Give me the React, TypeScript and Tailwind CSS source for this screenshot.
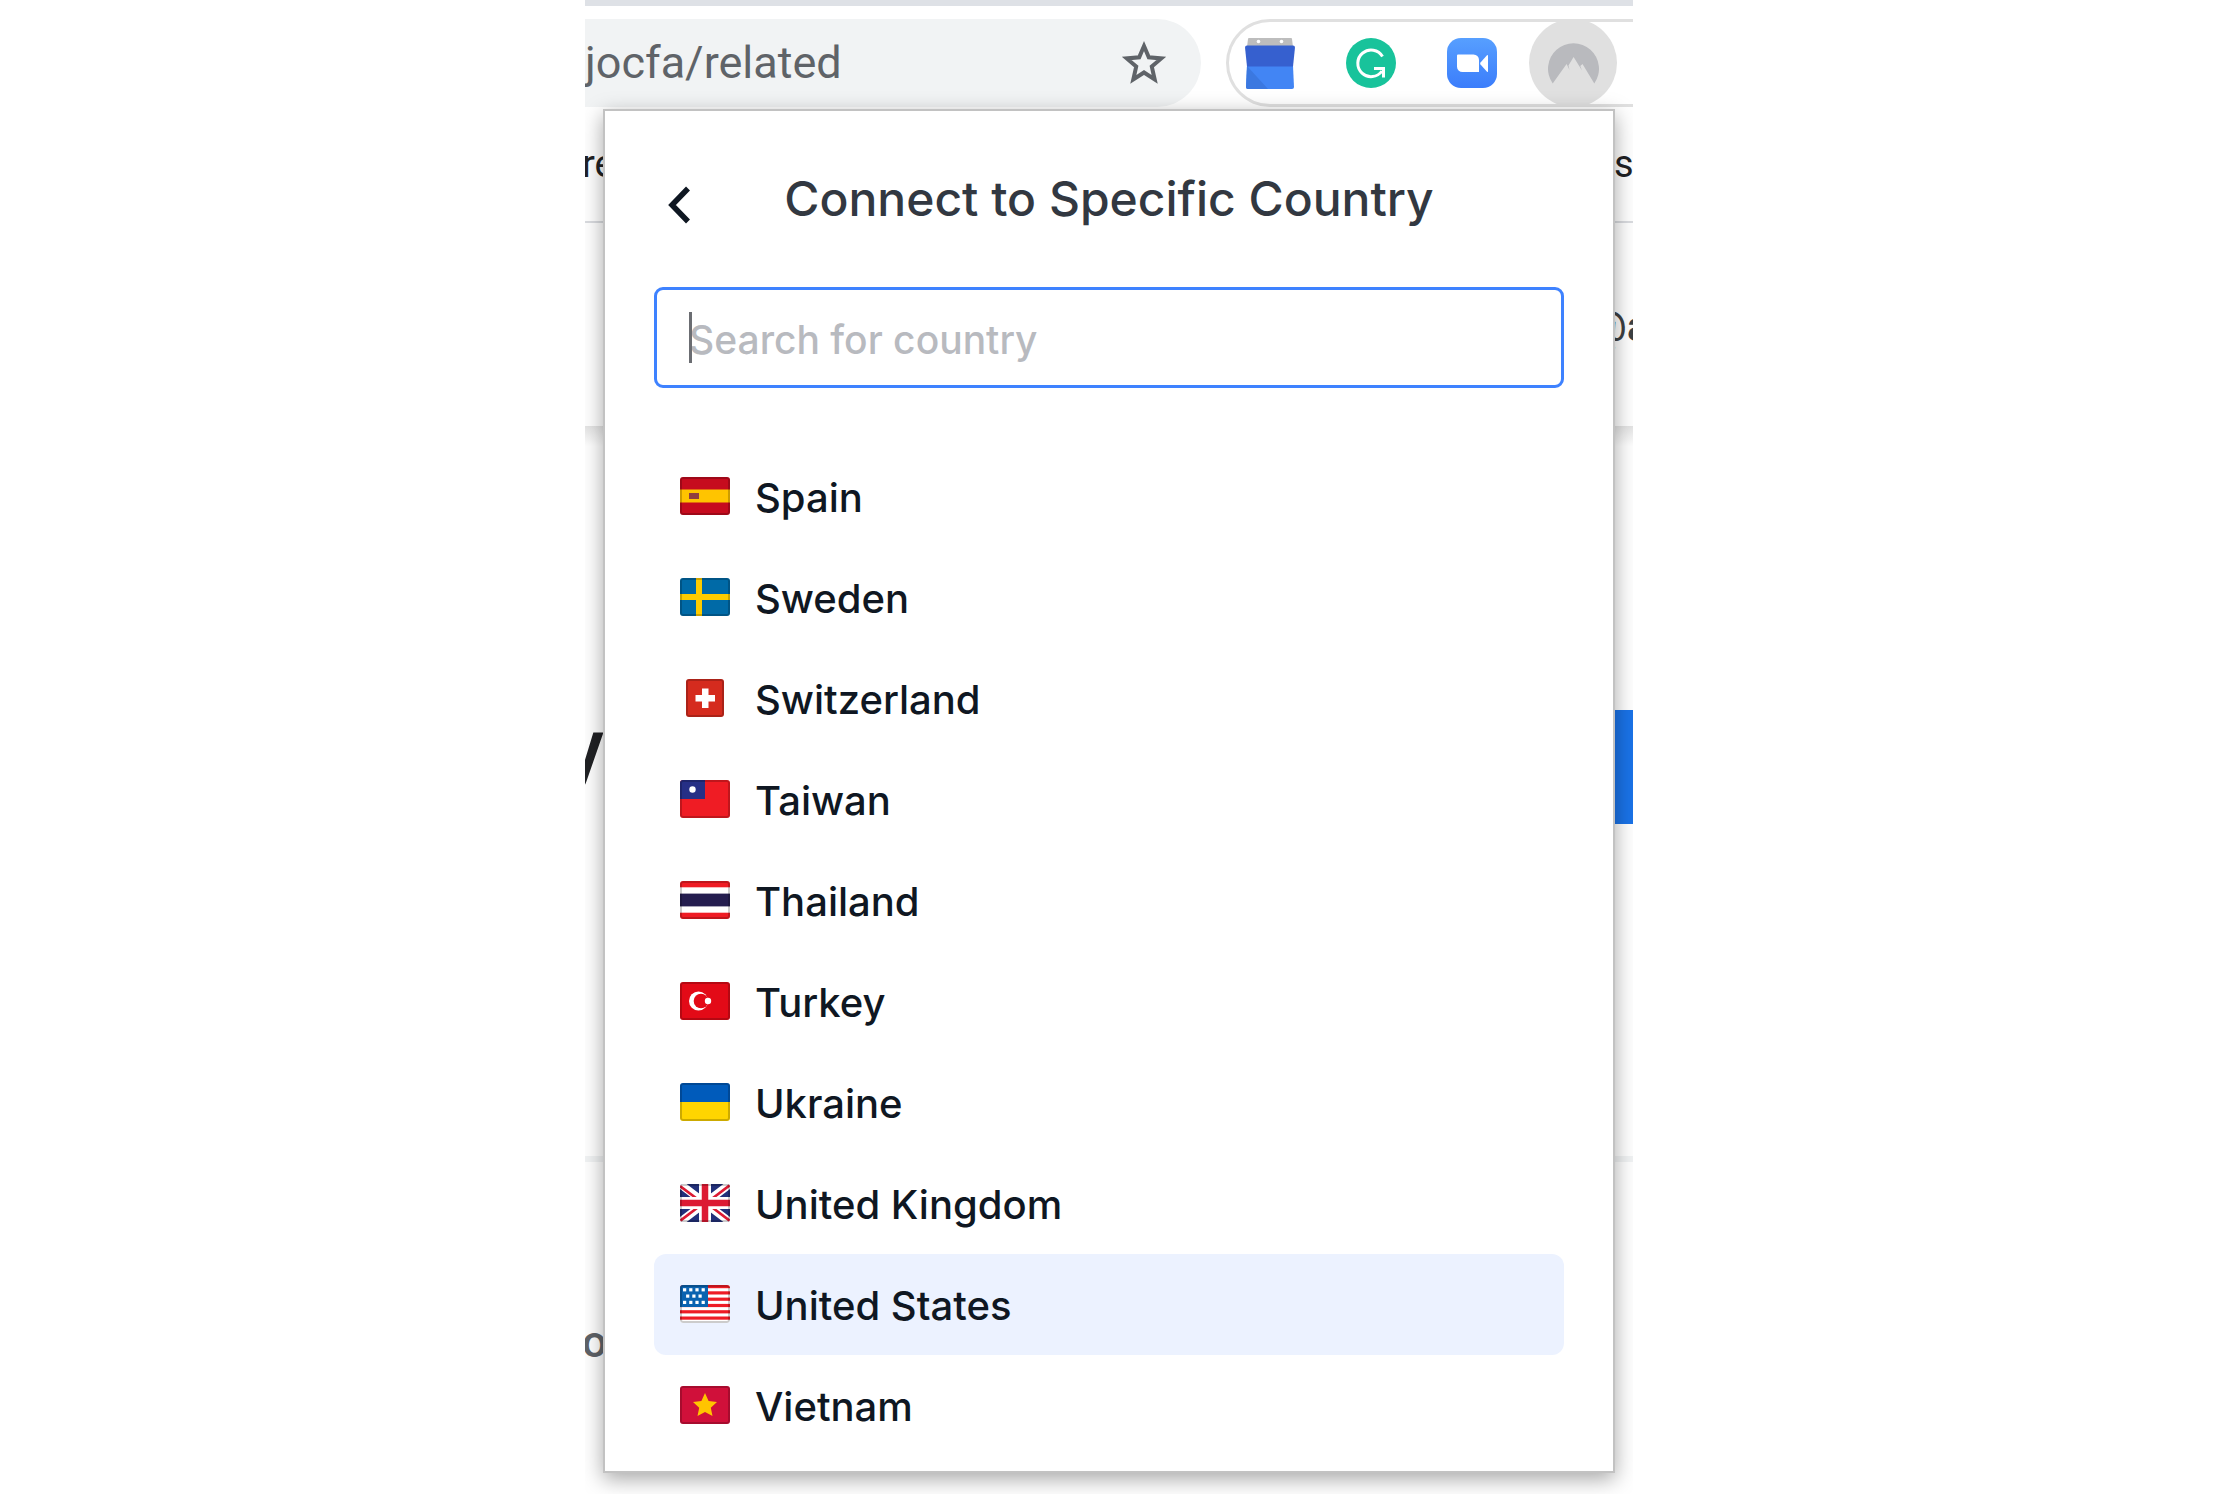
import type { ReactNode } from "react";

function FlagFrame({ width = 50, children }: { width?: number; children: ReactNode }) {
  return (
    <svg viewBox={`0 0 ${width} 38`} width={width} height={38} className="block rounded-[3px]" aria-hidden="true">
      {children}
      <rect x="1" y="1" width={width - 2} height="36" rx="2" fill="none" stroke="#000" strokeOpacity="0.2" strokeWidth="2" />
    </svg>
  );
}

const starPoints = "25,7 28.6,15 37,16 30.8,21.8 32.5,30 25,26 17.5,30 19.2,21.8 13,16 21.4,15";

const countries: { name: string; flag: ReactNode }[] = [
  {
    name: "Spain",
    flag: (
      <FlagFrame>
        <rect width="50" height="38" fill="#c60b1e" />
        <rect y="12.5" width="50" height="13" fill="#ffc400" />
        <rect x="9" y="16" width="10" height="6" fill="#903f3f" />
      </FlagFrame>
    ),
  },
  {
    name: "Sweden",
    flag: (
      <FlagFrame>
        <rect width="50" height="38" fill="#006aa7" />
        <rect x="16" width="6" height="38" fill="#fecc00" />
        <rect y="16" width="50" height="6" fill="#fecc00" />
      </FlagFrame>
    ),
  },
  {
    name: "Switzerland",
    flag: (
      <FlagFrame width={38}>
        <rect width="38" height="38" fill="#d52b1e" />
        <path d="M16 9.500h6.500v6.500h6.500v6.500h-6.500v6.500h-6.500v-6.500h-6.500v-6.500h6.500z" fill="#fff" />
      </FlagFrame>
    ),
  },
  {
    name: "Taiwan",
    flag: (
      <FlagFrame>
        <rect width="50" height="38" fill="#ef1c24" />
        <rect width="25" height="19" fill="#262f86" />
        <circle cx="12.500" cy="9.500" r="3.200" fill="#fff" />
      </FlagFrame>
    ),
  },
  {
    name: "Thailand",
    flag: (
      <FlagFrame>
        <rect width="50" height="38" fill="#ef1c24" />
        <rect y="6.300" width="50" height="25.400" fill="#fff" />
        <rect y="12.600" width="50" height="12.800" fill="#241d4f" />
      </FlagFrame>
    ),
  },
  {
    name: "Turkey",
    flag: (
      <FlagFrame>
        <rect width="50" height="38" fill="#e30a17" />
        <circle cx="18.500" cy="19" r="9.500" fill="#fff" />
        <circle cx="21" cy="19" r="7.300" fill="#e30a17" />
        <circle cx="28" cy="19" r="3.200" fill="#fff" />
      </FlagFrame>
    ),
  },
  {
    name: "Ukraine",
    flag: (
      <FlagFrame>
        <rect width="50" height="19" fill="#005bbb" />
        <rect y="19" width="50" height="19" fill="#ffd500" />
      </FlagFrame>
    ),
  },
  {
    name: "United Kingdom",
    flag: (
      <FlagFrame>
        <rect width="50" height="38" fill="#22307a" />
        <path d="M0 0 50 38M50 0 0 38" stroke="#fff" strokeWidth="8" />
        <path d="M0 2 20 17M50 1 29 17M0 37 21 21M50 37 29 21" stroke="#dc1a33" strokeWidth="2.600" />
        <path d="M25 0v38M0 19h50" stroke="#fff" strokeWidth="12" />
        <path d="M25 0v38M0 19h50" stroke="#dc1a33" strokeWidth="6.500" />
      </FlagFrame>
    ),
  },
  {
    name: "United States",
    flag: (
      <FlagFrame>
        <rect width="50" height="38" fill="#fff" />
        {[0, 6.3, 12.6, 18.9, 25.2, 31.5].map((y) => (
          <rect key={y} y={y} width="50" height="3.200" fill="#ee1c25" />
        ))}
        <rect width="28" height="22" fill="#0a63b0" />
        {[3, 9.2, 15.4, 21.6].map((x) => (
          <g key={x} fill="#fff">
            <rect x={x} y="3.200" width="3.200" height="3.200" />
            <rect x={x} y="15.800" width="3.200" height="3.200" />
          </g>
        ))}
        {[6.1, 12.3, 18.5].map((x) => (
          <rect key={x} x={x} y="9.500" width="3.200" height="3.200" fill="#fff" />
        ))}
      </FlagFrame>
    ),
  },
  {
    name: "Vietnam",
    flag: (
      <FlagFrame>
        <rect width="50" height="38" fill="#d0103a" />
        <polygon points={starPoints} fill="#ffc400" />
      </FlagFrame>
    ),
  },
];

function CalendarIcon() {
  return (
    <svg viewBox="0 0 50 51" width="50" height="51" aria-hidden="true">
      <path d="M4 0h42q1 0 1 1l1 8H2l1-8q0-1 1-1z" fill="#bdbdbd" />
      <circle cx="13.500" cy="3.500" r="1.800" fill="#fff" />
      <circle cx="36.500" cy="3.500" r="1.800" fill="#fff" />
      <path d="M2 28h46l1 21q0 2-2 2H3q-2 0-2-2z" fill="#4285f4" />
      <path d="M2 28l21 23H3q-2 0-2-2z" fill="#3b78e0" />
      <path d="M2 7.500h46q2 0 2 2L48 28.500H2L0 9.500q0-2 2-2z" fill="#3660cf" />
    </svg>
  );
}

function GrammarlyIcon() {
  return (
    <svg viewBox="0 0 50 50" width="50" height="50" aria-hidden="true">
      <circle cx="25" cy="25" r="25" fill="#18c39b" />
      <g fill="none" stroke="#fff" strokeWidth="3">
        <path d="M36.500 18.500A13.300 13.300 0 1 0 36 33" />
        <path d="M28 30.500h9.500v9" />
      </g>
    </svg>
  );
}

function ZoomIcon() {
  return (
    <svg viewBox="0 0 50 50" width="50" height="50" aria-hidden="true">
      <defs>
        <linearGradient id="zoomBlue" x1="0" y1="0" x2="0" y2="1">
          <stop offset="0" stopColor="#579fff" />
          <stop offset="1" stopColor="#3b7dfb" />
        </linearGradient>
      </defs>
      <rect width="50" height="50" rx="14" fill="url(#zoomBlue)" />
      <path d="M11 16.500h15.500a5.500 5.500 0 0 1 5.500 5.500v12H15.500a5.500 5.500 0 0 1-5.500-5.500v-11q0-1 1-1z" fill="#fff" />
      <path d="M33.500 24.500 40 17.300q1-.8 1 .5v15.400q0 1.300-1 .5L33.500 26.500q-.8-1 0-2z" fill="#fff" />
    </svg>
  );
}

function MountainIcon() {
  return (
    <svg viewBox="0 0 51 42" width="51" height="42" aria-hidden="true">
      <path
        d="M4.700 41.500A25.500 25.500 0 1 1 46.300 41.500L34.500 22 32.300 24 34 28.500 25.600 15 20.500 23.500 21.500 28 18.600 22z"
        fill="#b9babe"
      />
    </svg>
  );
}

function PageBehind() {
  return (
    <div className="font-[Roboto,sans-serif] text-[#202124]">
      <div className="h-[6px] bg-[#dee1e6]" />
      <header className="flex gap-[25px] pt-[13px]">
        <div className="flex h-[88px] w-[616px] items-center justify-between rounded-r-full bg-[#f1f3f4] pr-[33px]">
          <span className="text-[45px] leading-[52px] text-[#5f6368]">jocfa/related</span>
          <button type="button" aria-label="Bookmark this page">
            <svg viewBox="0 0 48 46" width="48" height="46" fill="none" stroke="#5f6368" strokeWidth="4" aria-hidden="true">
              <path d="M24 6 28.800 17.300 41.300 18.400 31.800 26.600 34.700 39.500 24 32.500 13.300 39.500 16.200 26.600 6.700 18.400 19.200 17.300z" />
            </svg>
          </button>
        </div>
        <nav aria-label="Extensions" className="relative flex h-[88px] flex-1 items-center rounded-l-full border-[3px] border-r-0 border-[#e0e0e0] pl-[16px]">
          <div className="flex items-center gap-[51px]">
            <button type="button" aria-label="Calendar"><CalendarIcon /></button>
            <button type="button" aria-label="Grammarly"><GrammarlyIcon /></button>
            <button type="button" aria-label="Zoom"><ZoomIcon /></button>
          </div>
          <button
            type="button"
            aria-label="VPN"
            className="ml-[32px] flex size-[88px] shrink-0 items-center justify-center rounded-full bg-[#e0e0e0]"
          >
            <MountainIcon />
          </button>
        </nav>
      </header>
      <div className="flex h-[116px] items-center justify-between border-b-2 border-[#dadce0] text-[38px] leading-[44px]">
        <span className="-ml-[3px]">re</span>
        <span className="w-[19px]">s</span>
      </div>
      <div className="flex h-[203px] items-center justify-end overflow-hidden text-[42px] leading-[48px] text-[#3c4043]">
        <span className="w-[44px] pt-[4px] font-medium">@a</span>
      </div>
      <main className="relative h-[730px] pt-[284px]">
        <div className="absolute inset-x-0 top-0 h-[20px] bg-linear-to-b from-[#e4e4e4] to-white" />
        <div className="flex h-[114px] items-start justify-between">
          <span className="flex w-[19px] justify-end text-[80px] leading-[76px] font-medium">y</span>
          <span className="h-full w-[20px] bg-[#1a73e8]" />
        </div>
      </main>
      <section className="h-[338px] border-t-[6px] border-[#f1f3f4] pt-[154px]">
        <span className="-ml-[3px] block text-[44px] leading-[52px] font-medium text-[#5f6368]">o</span>
      </section>
    </div>
  );
}

export default function App() {
  return (
    <div className="bg-white">
      <div className="mx-auto w-full max-w-[1050px] pr-[2px]">
        <div className="relative overflow-hidden">
          <PageBehind />
          <section
            aria-label="Connect to Specific Country"
            className="absolute top-[109px] right-[18px] left-[18px] border-2 border-[#c2c2c2] bg-white px-[49px] pb-[15px] font-[Inter,sans-serif] shadow-[0_6px_20px_rgba(0,0,0,0.35)]"
          >
            <header className="relative flex h-[176px] items-center justify-center">
              <button type="button" aria-label="Back" className="absolute left-[6px] p-[6px]">
                <svg viewBox="0 0 24 38" width="24" height="38" fill="none" stroke="#0f1722" strokeWidth="5.500" className="mt-[12px]" aria-hidden="true">
                  <path d="M22 2.500 6 19l16 16.500" />
                </svg>
              </button>
              <h1 className="text-[48px] leading-[60px] font-medium text-[#323841]">Connect to Specific Country</h1>
            </header>
            <div className="relative">
              <input
                type="text"
                aria-label="Search for country"
                placeholder="Search for country"
                className="block h-[101px] w-full rounded-[9px] border-[3px] border-[#3e82ff] pt-[3px] pr-8 pl-[32px] text-[39px] font-medium outline-none placeholder:text-[#b8babf]"
              />
              <span className="absolute top-[25px] left-[35px] h-[51px] w-[3px] bg-[#6b6d72]" />
            </div>
            <ul className="mt-[58px]">
              {countries.map(({ name, flag }) => (
                <li key={name}>
                  <button
                    type="button"
                    className={
                      name === "United States"
                        ? "flex h-[101px] w-full items-center rounded-[12px] bg-[#ecf2ff] pl-[26px]"
                        : "flex h-[101px] w-full items-center rounded-[12px] pl-[26px]"
                    }
                  >
                    <span className="flex w-[50px] justify-center pb-[2px]">{flag}</span>
                    <span className="ml-[25px] pt-[2px] text-[40px] leading-[52px] font-medium text-[#0f1722]">{name}</span>
                  </button>
                </li>
              ))}
            </ul>
          </section>
        </div>
      </div>
    </div>
  );
}
